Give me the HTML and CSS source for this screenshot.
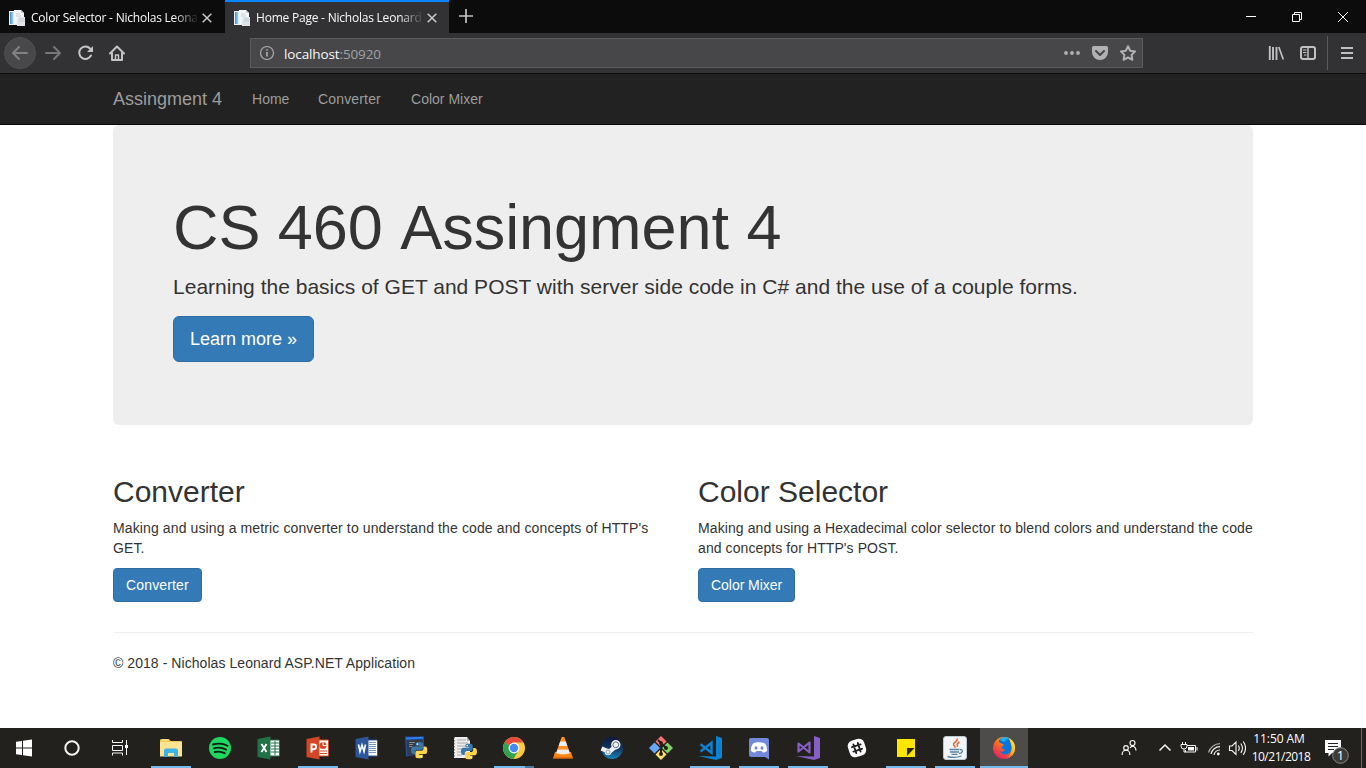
FILE: index.html
```html
<!DOCTYPE html>
<html lang="en">
<head>
<meta charset="utf-8">
<title>Home Page - Nicholas Leonard</title>
<link rel="stylesheet" href="styles.css">
</head>
<body>
<svg class="defs" aria-hidden="true">
  <defs>
    <linearGradient id="pane" x1="0" x2="1"><stop offset="0" stop-color="#3f8fc0"/><stop offset="1" stop-color="#b5e0f5"/></linearGradient>
    <linearGradient id="steamg" x1="0" x2="0" y1="0" y2="1"><stop offset="0" stop-color="#101a3c"/><stop offset=".5" stop-color="#10345f"/><stop offset="1" stop-color="#1684b8"/></linearGradient>
    <linearGradient id="foxg" x1=".8" y1="0" x2=".2" y2="1"><stop offset="0" stop-color="#ffc226"/><stop offset=".4" stop-color="#ff7a16"/><stop offset="1" stop-color="#e31570"/></linearGradient>
    <linearGradient id="foxg2" x1="1" y1="0" x2="0" y2="1"><stop offset="0" stop-color="#fff44f"/><stop offset=".5" stop-color="#ffb80e"/><stop offset="1" stop-color="#ff4647"/></linearGradient>
    <symbol id="favicon" viewBox="0 0 16 16">
      <path d="M0 1h10v14H0z" fill="#e9f2f6"/><path d="M1 2h3.500v12H1z" fill="url(#pane)"/>
      <path d="M5 0h7l3 3v11H5z" fill="#f4f5f6"/><path d="M12 0l3 3h-3z" fill="#c3ccd2"/>
      <path d="M9 7h7v9H8v-5z" fill="#dfe3e8"/><path d="M10 9h5M10 11h5M7 4h4M7 6h5" stroke="#bcc5d0" stroke-width=".8"/>
    </symbol>
    <symbol id="python" viewBox="0 0 16 16">
      <path d="M7.800 0C4.700 0 4.500 1 4.500 2.200v1.500H8.200v.6H2.300C.8 4.300 0 5.700 0 8s.9 3.600 2.300 3.600h1.500V9.800C3.800 8.400 4.800 7.400 6 7.400h3.900c1.100 0 1.800-.8 1.800-1.900V2.200C11.700.8 10.500 0 7.800 0z" fill="#3a76a8"/>
      <path d="M8.200 16c3.100 0 3.300-1 3.300-2.200v-1.500H7.800v-.6h5.900C15.200 11.700 16 10.300 16 8s-.9-3.600-2.300-3.600h-1.500v1.800c0 1.400-1 2.400-2.200 2.400H6.100c-1.100 0-1.800.8-1.800 1.900v3.300C4.300 15.200 5.500 16 8.200 16z" fill="#ffd44a"/>
      <circle cx="6.200" cy="2.100" r=".8" fill="#fff"/><circle cx="9.800" cy="13.900" r=".8" fill="#fff"/>
    </symbol>
  </defs>
</svg>
<div class="screen">
  <div class="tabstrip">
    <div class="tab">
      <svg class="fav" viewBox="0 0 16 16"><use href="#favicon"/></svg>
      <span class="tab-title">Color Selector - Nicholas Leonard</span>
      <svg class="tab-x" viewBox="0 0 10 10"><path d="M.7.7l8.600 8.600M9.300.7L.7 9.300"/></svg>
    </div>
    <div class="tab tab-active">
      <svg class="fav" viewBox="0 0 16 16"><use href="#favicon"/></svg>
      <span class="tab-title">Home Page - Nicholas Leonard</span>
      <svg class="tab-x" viewBox="0 0 10 10"><path d="M.7.7l8.600 8.600M9.300.7L.7 9.300"/></svg>
    </div>
    <svg class="newtab" width="34" height="33" viewBox="0 0 34 33"><path d="M17 9v14M10 16h14" stroke="#c4c4c4" stroke-width="1.700"/></svg>
    <svg class="wincontrols" width="138" height="33" viewBox="0 0 138 33" fill="none" stroke="#fff">
      <path d="M18 16.500h10M64.500 14.500h7v7h-7zM66.500 14.500v-2h7v7h-2M110 12l10 10M120 12l-10 10"/>
    </svg>
  </div>
  <div class="toolbar">
    <svg class="navicons" width="132" height="40" viewBox="0 0 132 40" fill="none" stroke-linecap="round" stroke-linejoin="round">
      <circle cx="20" cy="20" r="15.500" fill="#48484a" stroke="#505052"/>
      <path d="M27 20H13M19 14l-6 6 6 6" stroke="#828283" stroke-width="2"/>
      <path d="M46 20h14M54 14l6 6-6 6" stroke="#777779" stroke-width="2"/>
      <path d="M90 15.500A6.200 6.200 0 1 0 91 22.500" stroke="#c4c4c5" stroke-width="2"/><path d="M93 13v6h-6z" fill="#c4c4c5"/>
      <path d="M110 20.500l7-7 7 7M112 20v7h10v-7" stroke="#c4c4c5" stroke-width="2"/><path d="M115.500 27v-5h3v5" stroke="#c4c4c5" stroke-width="1.500"/>
    </svg>
    <div class="urlbar">
      <svg width="16" height="16" viewBox="0 0 16 16" fill="none" stroke="#adadae"><circle cx="8" cy="8" r="6.500" stroke-width="1.200"/><path d="M8 7v4.500M8 4.300v1.500" stroke-width="1.600"/></svg>
      <span class="url">localhost<span class="port">:50920</span></span>
      <svg class="urlicons" width="79" height="28" viewBox="0 0 79 28">
        <g fill="#b1b1b3"><circle cx="3" cy="14" r="1.900"/><circle cx="9" cy="14" r="1.900"/><circle cx="15" cy="14" r="1.900"/>
        <path d="M30.500 7h13a1.500 1.500 0 0 1 1.500 1.500V13a8 8 0 0 1-16 0V8.500A1.500 1.500 0 0 1 30.500 7z"/></g>
        <path d="M33 12l4 4 4-4" fill="none" stroke="#474749" stroke-width="2" stroke-linecap="round" stroke-linejoin="round"/>
        <path d="M65 7.200l2.200 4.500 4.900.7-3.500 3.500.8 4.900-4.400-2.300-4.400 2.300.8-4.900-3.500-3.500 4.900-.7z" fill="none" stroke="#b1b1b3" stroke-width="2" stroke-linejoin="round"/>
      </svg>
    </div>
    <svg class="toolicons" width="106" height="40" viewBox="0 0 106 40" fill="none" stroke="#c0c0c1">
      <path d="M9.800 13v14M13 14v13M16.500 14v13" stroke-width="1.900"/><path d="M18.800 14l4.500 12.500" stroke-width="1.700"/>
      <rect x="41" y="14" width="14" height="12" rx="2" stroke-width="2"/><path d="M48 14v12" stroke-width="1.500"/><path d="M43 17h3.500M43 19.500h3.500M44 22h2.500"/>
      <path d="M67.500 3v34" stroke="#5b5b5d"/>
      <path d="M81 15h12M81 20h12M81 25h12" stroke-width="2"/>
    </svg>
  </div>

  <div class="page">
    <nav class="navbar">
      <div class="container nav-row">
        <a class="brand">Assingment 4</a><a class="navlink home">Home</a><a class="navlink">Converter</a><a class="navlink">Color Mixer</a>
      </div>
    </nav>
    <main class="container">
      <section class="jumbotron">
        <h1>CS 460 Assingment 4</h1>
        <p class="lead">Learning the basics of GET and POST with server side code in C# and the use of a couple forms.</p>
        <p class="lead"><a class="btn btn-lg">Learn more »</a></p>
      </section>
      <div class="row">
        <section class="col">
          <h2>Converter</h2>
          <p class="blurb">Making and using a metric converter to understand the code and concepts of HTTP's GET.</p>
          <p><a class="btn btn-converter">Converter</a></p>
        </section>
        <section class="col">
          <h2>Color Selector</h2>
          <p class="blurb blurb-color">Making and using a Hexadecimal color selector to blend colors and understand the code and concepts for HTTP's POST.</p>
          <p><a class="btn btn-mixer">Color Mixer</a></p>
        </section>
      </div>
      <hr>
      <footer><p>© 2018 - Nicholas Leonard ASP.NET Application</p></footer>
    </main>
  </div>

  <div class="taskbar">
    <div class="system">
      <svg class="cell" viewBox="0 0 48 40"><path d="M16 13.700l6-.8v6.600H16zM23 12.800l9-1.200v7.900h-9zM16 20.500h6v6.600l-6-.8zM23 20.500h9v7.900l-9-1.200z" fill="#fff"/></svg>
      <svg class="cell" viewBox="0 0 48 40"><circle cx="24" cy="20" r="6.700" fill="none" stroke="#f4f4f4" stroke-width="2"/></svg>
      <svg class="cell" viewBox="0 0 48 40" fill="none" stroke="#f4f4f4"><path d="M16.500 12v2.500h10V12M16.500 27.500v-2.500h10v2.500M16.500 17.500h10v5h-10zM30.500 12v15"/><path d="M29 17h3v3h-3z" fill="#fff" stroke="none"/></svg>
    </div>
    <div class="apps">
      <svg class="cell open" viewBox="0 0 48 40"><path d="M14 11h8l1.500 2H34a1 1 0 0 1 1 1v13H13V12z" fill="#f3c64e"/><path d="M13 14h22v14.500H13z" fill="#ffe394"/><path d="M15 12h6" stroke="#fff1b5"/><path d="M17 22.500a2 2 0 0 1 2-2h10a2 2 0 0 1 2 2V29h-4v-4h-6v4h-4z" fill="#3bb4e8"/></svg>
      <svg class="cell" viewBox="0 0 48 40"><circle cx="24" cy="20" r="11" fill="#1ed760"/><path d="M17 16.500c4.500-1.300 10.500-1 14.500 1.300M18 20.300c4-1.100 8.500-.6 12 1.300M18.700 24c3.500-.8 7-.4 10 1.200" fill="none" stroke="#191919" stroke-width="1.900" stroke-linecap="round"/></svg>
      <svg class="cell" viewBox="0 0 48 40"><path d="M24 12h10.500v16H24z" fill="#fff" stroke="#217346"/><path d="M26 15h8M26 18h8M26 21h8M26 24h8M30 13v14" stroke="#217346"/><path d="M12.500 11l13-2.500v23l-13-2.500z" fill="#217346"/><path d="M16.500 16l5 8M21.500 16l-5 8" stroke="#fff" stroke-width="1.900"/></svg>
      <svg class="cell open" viewBox="0 0 48 40"><path d="M24 12h10.500v16H24z" fill="#fff" stroke="#d24726"/><circle cx="29" cy="17.500" r="3.500" fill="#d24726"/><path d="M29 17.500V14M29 17.500h3.500" stroke="#fff"/><path d="M26 23h7M26 25.500h7" stroke="#d24726" stroke-width="1.200"/><path d="M12.500 11l13-2.500v23l-13-2.500z" fill="#d24726"/><path d="M17.500 24.500v-8h2.300a2.300 2.300 0 0 1 0 4.700h-2.300" fill="none" stroke="#fff" stroke-width="1.900"/></svg>
      <svg class="cell" viewBox="0 0 48 40"><path d="M24 12h10.500v16H24z" fill="#fff" stroke="#2b579a"/><path d="M26 14.500h7M26 16.500h7M26 18.500h7M26 20.500h7M26 22.500h7M26 24.500h7" stroke="#7896c2"/><path d="M12.500 11l13-2.500v23l-13-2.500z" fill="#2b579a"/><path d="M15.500 16.500l1.500 7 2-6.500 2 6.500 1.500-7" fill="none" stroke="#fff" stroke-width="1.600"/></svg>
      <svg class="cell" viewBox="0 0 48 40"><path d="M13 8.500h19v17l-18 3z" fill="#1d4f9c"/><path d="M14.500 12l16-.7v14l-15 2z" fill="#343a41"/><path d="M14 10.500l17-.8" stroke="#2b7df0" stroke-width="2"/><path d="M17 14.500h6M17 16.500h4M17 18.500h3" stroke="#848a90"/><use href="#python" x="19" y="14" width="16.500" height="16.500"/></svg>
      <svg class="cell" viewBox="0 0 48 40"><path d="M13 9h13l3 4v17H13z" fill="#eeeeef"/><path d="M26 9l3 4h-3z" fill="#aaa"/><path d="M16 12h9M16 15h11M16 18h11M16 21h8M16 24h5M16 27h5" stroke="#aaa"/><path d="M13.500 9v21" stroke="#888" stroke-dasharray="1.500 1.500"/><use href="#python" x="20" y="15.500" width="16" height="16"/></svg>
      <svg class="cell open multi" viewBox="0 0 48 40"><circle cx="24" cy="20" r="11" fill="#fbcb3d"/><path d="M24 20L14.500 14.500A11 11 0 0 1 33.500 14.500H24z" fill="#e64a3c"/><path d="M14.500 14.500A11 11 0 0 0 23.500 31l5-8.500L24 20z" fill="#30a352"/><circle cx="24" cy="20" r="5.400" fill="#fff"/><circle cx="24" cy="20" r="4.200" fill="#4688f4"/></svg>
      <svg class="cell" viewBox="0 0 48 40"><path d="M16 24h16l2 6.500H14z" fill="#f58410"/><path d="M22.700 9h2.600l6 17q-7.300 3-14.600 0z" fill="#ff9025"/><path d="M21.200 13.500h5.600l1.500 4.500h-8.600zM18.500 21.500h11l1.300 3.700q-6.800 2-13.600 0z" fill="#ededed"/><path d="M14.500 30h19" stroke="#c85b06"/></svg>
      <svg class="cell" viewBox="0 0 48 40"><circle cx="24" cy="20" r="11" fill="url(#steamg)"/><path d="M13.500 20.500l7 3M21 24l6-5" stroke="#eee" stroke-width="4.500"/><circle cx="27.800" cy="16.800" r="4.700" fill="#eee"/><circle cx="27.800" cy="16.800" r="2.900" fill="none" stroke="#68728a" stroke-width="1"/><circle cx="20" cy="24" r="3.300" fill="#eee"/><circle cx="20" cy="24" r="2" fill="none" stroke="#7690a5" stroke-width=".8"/></svg>
      <svg class="cell" viewBox="0 0 48 40"><path d="M24 8l5.500 5.500L24 19l-5.500-5.500z" fill="#ff7373"/><path d="M30.500 14.500L36 20l-5.500 5.500L25 20z" fill="#80d463"/><path d="M17.500 14.500L23 20l-5.500 5.500L12 20z" fill="#6aa5fa"/><path d="M24 21l5.500 5.500L24 32l-5.500-5.500z" fill="#ffe16b"/><path d="M24 14v12M21 12l8 8" stroke="#241f1b" stroke-width="2"/><circle cx="24" cy="15" r="1.900" fill="#241f1b"/><circle cx="24" cy="26" r="2" fill="#241f1b"/><circle cx="29" cy="20" r="2" fill="#241f1b"/></svg>
      <svg class="cell open" viewBox="0 0 48 40"><path d="M30 8l6 2v20l-6 2-18-4 18 .5z" fill="#0b82d2"/><path d="M14.500 16.200l11 8.500v-10L14.500 23.500" fill="none" stroke="#0b82d2" stroke-width="2.400"/></svg>
      <svg class="cell open" viewBox="0 0 48 40"><path d="M16 10h16a2 2 0 0 1 2 2v19.500l-4-2.500H16a2 2 0 0 1-2-2V12a2 2 0 0 1 2-2z" fill="#7289da"/><path d="M18 15.500c3-1.800 9-1.800 12 0 1.500 2.200 2.300 4.500 2 7.500-1.400 1.200-3 1.600-4 1.600l-1.500-1.600h-5L20 24.600c-1 0-2.600-.4-4-1.600-.3-3 .5-5.300 2-7.500z" fill="#fff"/><ellipse cx="21" cy="20" rx="1.500" ry="1.700" fill="#7289da"/><ellipse cx="27" cy="20" rx="1.500" ry="1.700" fill="#7289da"/></svg>
      <svg class="cell open" viewBox="0 0 48 40"><path d="M30 8l6 2v20l-6 2-18-4 18 .5z" fill="#865fc5"/><path d="M14.500 15.500l5 4 6-5v10l-6-5-5 4z" fill="none" stroke="#865fc5" stroke-width="2.200" stroke-linejoin="round"/></svg>
      <svg class="cell" viewBox="0 0 48 40"><g transform="rotate(-18 24 20)"><rect x="15.500" y="11.500" width="17" height="17" rx="5.500" fill="#fff"/><path d="M21.700 15.500v9M26.300 15.500v9M19.500 17.700h9M19.500 22.300h9" stroke="#222" stroke-width="1.900" stroke-linecap="round"/></g></svg>
      <svg class="cell open" viewBox="0 0 48 40"><path d="M15 11h18v18H15z" fill="#ffe600"/><path d="M25 20h7.500L25 28z" fill="#282720"/></svg>
      <svg class="cell open" viewBox="0 0 48 40"><rect x="12.500" y="8.500" width="23" height="23" rx="2.500" fill="#f3f4f5" stroke="#bccbd8"/><path d="M26 10.500c1.500 3-4.500 4-3.500 6 .5 1.500 2 2 1.500 3.500M28.500 14c-3.500 1.500-2 3-2 5" fill="none" stroke="#ed6a31" stroke-width="1.500"/><path d="M18.500 21.500h10M19 24h9M20.500 26.300h6M16.500 28.500q8 2 14-.5M29 21.500c4 0 2.500 4-1 4" fill="none" stroke="#5681a0" stroke-width="1.300"/></svg>
      <svg class="cell open active" viewBox="0 0 48 40"><circle cx="24" cy="20" r="11" fill="url(#foxg)"/><path d="M19 12c3-4 9-3 11 .5 3 3 2.500 10-.5 12.500-4 3-8 1-9.500-1.500 2.500.5 4 0 5-1.500l-4-2 3-3.500-5-2z" fill="#0875dc"/><path d="M20 12c2.500-3.500 7-3.200 9.500-1-3-.5-4.500.5-4.500 3z" fill="#12b8ff"/><path d="M29.500 10.500C34 13 35 16.500 35 20a11 11 0 0 1-9 10.800c4-3 6.500-7.800 5.500-12.800-.5-3-1.800-4.500-2-7.500z" fill="url(#foxg2)"/></svg>
    </div>
    <div class="tray">
      <svg class="trayicons" width="140" height="40" viewBox="0 0 140 40" fill="none" stroke="#f5f5f5" stroke-width="1.200">
        <g transform="translate(1 0)"><circle cx="19" cy="20" r="2.300"/><path d="M15.200 27v-1a3.800 3.800 0 0 1 7.600 0v1"/><circle cx="25.500" cy="15" r="2.500"/><path d="M23 20c2.500-3.500 6-1.200 6 2.500"/></g>
        <path d="M53.500 22.500l5.500-5.500 5.500 5.500" stroke-width="1.500"/>
        <g stroke-width="1"><path d="M81 17.500h8.500v6.500H79.500v-2M91 19v3.500"/><path d="M82 19h6v3.500h-6z" fill="#fff" stroke="none"/><path d="M76.500 14v2M79.500 14v2M75 16.500h6v1.500a3 3 0 0 1-6 0zM78 21v3h2"/></g>
        <path d="M102.500 24.500A12 12 0 0 1 114 15.700" stroke="#aaa"/><path d="M105 26A9 9 0 0 1 114 18.700M108 27A6 6 0 0 1 114 22"/><circle cx="112.300" cy="26" r="1.400" fill="#fff" stroke="none"/>
        <path d="M123.500 18h2.500l4-4v12.500l-4-4h-2.500zM132.300 17.500q2 2.700 0 5.400M134.800 15.500q3.300 4.700 0 9.400M137.300 13.500q4.500 6.700 0 13.400" stroke-width="1.100"/>
      </svg>
      <div class="clock"><span class="time">11:50 AM</span><span>10/21/2018</span></div>
      <svg class="notices" width="50" height="40" viewBox="0 0 50 40"><path d="M9 12h16v13H16l-3.500 3.500V25H9z" fill="#fff"/><path d="M12 15.500h10M12 18.500h10M12 21.500h6" stroke="#222"/><circle cx="24.500" cy="27.500" r="7.800" fill="#3c3b39" stroke="#898885"/><text x="24.500" y="32" text-anchor="middle" class="count">1</text><path d="M45.500 0v40" stroke="#6b6a68"/></svg>
    </div>
  </div>
</div>
</body>
</html>
```
FILE: styles.css
```css
* { box-sizing: border-box; }
body { margin: 0; overflow: hidden; background: #fff; color: #333; font: 14px/20px "Liberation Sans", Arial, sans-serif; }
svg { display: block; flex: none; }
.defs { position: absolute; width: 0; height: 0; }
.screen { width: 1366px; height: 768px; display: flex; flex-direction: column; }

.tabstrip { height: 33px; flex: none; display: flex; background: #0c0c0d; }
.tab { width: 225px; display: flex; align-items: center; padding: 2px 13px 0 9px; color: #f9f9fa; font: 12px/18px "Open Sans", "Noto Sans", sans-serif; }
.tab-active { width: 224px; background: #323234; border-top: 2px solid #0a84ff; padding: 0 12px 0 9px; }
.fav { width: 16px; height: 16px; margin-right: 6px; }
.tab-title { width: 166px; overflow: hidden; white-space: nowrap; letter-spacing: -.22px; mask-image: linear-gradient(to right, #000 143px, transparent 168px); }
.tab-x { width: 10px; height: 10px; margin-left: auto; fill: none; stroke: #c9c9ca; stroke-width: 1.5; }
.wincontrols { margin-left: auto; }

.toolbar { height: 41px; flex: none; display: flex; background: #323234; border-bottom: 1px solid #0c0c0d; }
.urlbar { width: 893px; height: 30px; margin: 5px 0 0 118px; border: 1px solid #5b5b5d; background: #474749; display: flex; align-items: center; padding-left: 8px; }
.url { margin-left: 9px; padding-top: 1px; color: #f9f9fa; font: 13.500px/20px "Open Sans", "Noto Sans", sans-serif; letter-spacing: -.12px; }
.port { color: #a2a2a3; }
.urlicons { margin-left: auto; }
.toolicons { margin-left: auto; }

.page { flex: 1; min-height: 0; overflow: hidden; }
.container { width: 1140px; margin: 0 auto; }
.navbar { height: 51px; background: #222; border-bottom: 1px solid #080808; color: #9d9d9d; }
.nav-row { display: flex; align-items: center; height: 50px; }
.brand { font-size: 18px; padding-right: 15px; }
.navlink { padding: 0 15px; }
.home { width: 66px; }
.navlink:nth-child(3) { width: 93px; letter-spacing: .15px; white-space: nowrap; }
.jumbotron { height: 299.8px; padding: 68px 60px 48px; margin-bottom: 30px; background: #eee; border-radius: 6px; }
h1 { margin: 0 0 10px; font-size: 63px; line-height: 69.3px; font-kerning: none; letter-spacing: -.05px; }
h1, h2 { font-weight: 400; }
p { margin: 0 0 10px; }
.lead { font-size: 21px; line-height: 30px; margin-bottom: 13.500px; letter-spacing: .01px; }
.blurb { letter-spacing: .12px; }
.blurb-color { width: 558px; letter-spacing: .09px; }
footer { letter-spacing: .06px; }
.btn { display: inline-block; height: 34px; padding: 6px 12px; border: 1px solid #2e6da4; border-radius: 4px; background: #337ab7; color: #fff; vertical-align: middle; }
.btn-lg { height: 46px; padding: 10px 16px; border-radius: 6px; font-size: 18px; line-height: 24px; letter-spacing: 0; }
.btn-converter { width: 89px; letter-spacing: .15px; }
.btn-mixer { width: 97px; white-space: nowrap; letter-spacing: -.04px; }
.row { display: grid; grid-template-columns: 555px 555px; column-gap: 30px; }
h2 { margin: 20px 0 10px; font-size: 30px; line-height: 33px; }
hr { margin: 20px 0; border: 0; border-top: 1px solid #eee; }

.taskbar { height: 40px; flex: none; display: flex; background: #22211e; }
.system { display: flex; margin-right: 3px; }
.apps { display: flex; gap: 1px; }
.cell { width: 48px; height: 40px; }
.open { background: linear-gradient(#76b9ed, #76b9ed) 4px 38px / 40px 2px no-repeat; }
.multi { background: linear-gradient(to right, #76b9ed 31px, #4d7898 31px) 4px 38px / 40px 2px no-repeat; }
.active { background: linear-gradient(#76b9ed, #76b9ed) 0 38px / 48px 2px no-repeat #4d4c4a; }
.tray { display: flex; margin-left: auto; }
.clock { width: 70px; display: flex; flex-direction: column; align-items: center; padding-top: 2px; color: #fff; font: 12px/18px "Open Sans", "Noto Sans", sans-serif; letter-spacing: -.5px; white-space: nowrap; }
.time { letter-spacing: -.1px; padding-right: 4px; }
.count { fill: #fff; font: 13px "Open Sans", sans-serif; }
```
